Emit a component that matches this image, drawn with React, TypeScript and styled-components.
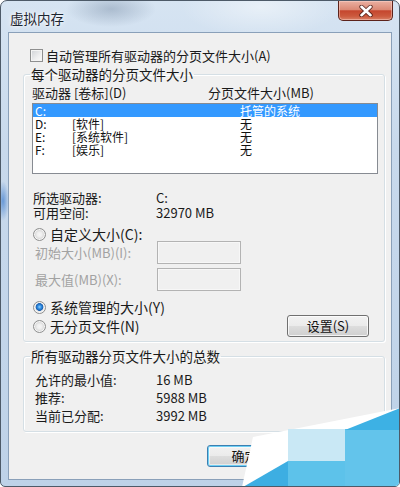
import React from "react";
import styled, { createGlobalStyle } from "styled-components";

const Global = createGlobalStyle`
  html, body { margin: 0; padding: 0; background: #ffffff; }
  body { font-family: "Noto Sans CJK SC", "Noto Sans", sans-serif; }
  * { box-sizing: border-box; }
`;

const FONT = `"Noto Sans CJK SC", "Noto Sans", sans-serif`;

const Window = styled.div`
  position: relative;
  width: 400px;
  height: 487px;
  display: flex;
  flex-direction: column;
  padding: 0 7px 6px 7px;
  border: 1px solid #4d5a68;
  border-radius: 7px 7px 5px 5px;
  overflow: hidden;
  background:
    radial-gradient(ellipse 45px 18px at 110px 8px, rgba(120, 140, 165, 0.45), transparent),
    radial-gradient(ellipse 6px 20px at 2px 200px, rgba(40, 110, 200, 0.6), transparent),
    radial-gradient(ellipse 80px 30px at 260px 6px, rgba(255, 255, 255, 0.45), transparent),
    linear-gradient(180deg, #d6e4f2 0%, #c8d9ec 30%, #bed2e8 100%);
`;

const TitleBar = styled.div`
  height: 31px;
  display: flex;
  justify-content: space-between;
  align-items: flex-start;
  flex-shrink: 0;
`;

const Title = styled.div`
  margin: 8px 0 0 2px;
  font-family: ${FONT};
  font-size: 13.5px;
  line-height: 18px;
  color: #1c2530;
  text-shadow: 0 0 6px rgba(255, 255, 255, 0.95), 0 0 3px rgba(255, 255, 255, 0.9);
`;

const CloseButton = styled.div`
  width: 55px;
  height: 20px;
  margin-right: -1px;
  display: flex;
  align-items: center;
  justify-content: center;
  border: 1px solid #5c231b;
  border-top: none;
  border-radius: 0 0 5px 5px;
  background: linear-gradient(180deg, #eab0a2 0%, #dc8a76 45%, #c5462e 52%, #cc5a3e 80%, #d98066 100%);
  box-shadow: inset 0 0 0 1px rgba(255, 220, 210, 0.45);
`;

const Client = styled.div`
  flex: 1;
  display: flex;
  flex-direction: column;
  background: #f0f0f0;
  border: 1px solid #8aa0b9;
  padding: 0 6px 0 14px;
  font-family: ${FONT};
  color: #1a1a1a;
`;

const CheckRow = styled.label`
  display: flex;
  align-items: center;
  gap: 3px;
  height: 13px;
  margin: 16px 0 0 7px;
  font-size: 13px;
  line-height: 15px;
`;

const CheckBox = styled.span`
  width: 13px;
  height: 13px;
  flex-shrink: 0;
  border: 1px solid #8e8f8f;
  background: linear-gradient(135deg, #cfd2d6 0%, #eeeeef 60%, #fbfbfb 100%);
  box-shadow: inset 0 0 0 1px #f4f4f4;
`;

const Group = styled.fieldset<{ $mt: number; $pb: number }>`
  margin: ${(p) => p.$mt}px 0 0 0;
  padding: 0 6px ${(p) => p.$pb}px 8px;
  border: 1px solid #d5dfe5;
  border-radius: 3px;
  box-shadow: inset 1px 1px 0 #ffffff, 1px 1px 0 #ffffff;
  min-width: 0;
`;

const Legend = styled.legend`
  padding: 0 1px;
  margin-left: -2px;
  font-size: 13.5px;
  line-height: 15px;
  color: #1a1a1a;
`;

const Headers = styled.div`
  display: grid;
  grid-template-columns: 176px 1fr;
  margin-top: 4px;
  font-size: 13px;
  line-height: 14px;
`;

const ListBox = styled.div`
  margin-top: 3px;
  height: 71px;
  border: 1px solid #878b92;
  background: #ffffff;
`;

const ListRow = styled.div<{ $sel?: boolean }>`
  display: grid;
  grid-template-columns: 37px 168px 1fr;
  height: 13px;
  padding-left: 2px;
  font-size: 12px;
  line-height: 13px;
  color: ${(p) => (p.$sel ? "#ffffff" : "#111111")};
  background: ${(p) => (p.$sel ? "#3399ff" : "transparent")};
`;

const InfoGrid = styled.div<{ $mt: number; $pl: number; $lh: number }>`
  display: grid;
  grid-template-columns: ${(p) => 124 - p.$pl}px 1fr;
  margin-top: ${(p) => p.$mt}px;
  padding-left: ${(p) => p.$pl}px;
  font-size: 13px;
  line-height: ${(p) => p.$lh}px;
`;

const RadioRow = styled.label<{ $mt: number }>`
  display: flex;
  align-items: center;
  gap: 4px;
  height: 14px;
  margin-top: ${(p) => p.$mt}px;
  padding-left: 1px;
  font-size: 14px;
  line-height: 14px;
`;

const Radio = styled.span<{ $on?: boolean }>`
  width: 13px;
  height: 13px;
  flex-shrink: 0;
  border-radius: 50%;
  border: 1px solid #8e8f8f;
  background: ${(p) =>
    p.$on
      ? "radial-gradient(circle at 50% 45%, #8fd0ff 0, #2d8ae0 2px, #1c5fae 3.6px, #e6e6e6 4.2px, #f8f8f8 100%)"
      : "radial-gradient(circle at 50% 50%, #f6f6f6 0, #eeeeee 2.5px, #d3d3d3 5px, #f4f4f4 100%)"};
  box-shadow: inset 0 0 0 1px #f6f6f6;
`;

const FieldRow = styled.div<{ $mt: number }>`
  display: grid;
  grid-template-columns: 122px 84px;
  align-items: center;
  margin-top: ${(p) => p.$mt}px;
  padding-left: 3px;
  font-size: 13px;
  line-height: 15px;
  color: #a2a2a2;
`;

const TextBox = styled.div`
  width: 84px;
  height: 23px;
  border: 1px solid #b3b3b3;
  background: #f0f0f0;
  box-shadow: inset 0 0 0 1px #f7f7f7;
`;

const BottomRow = styled.div`
  display: flex;
  align-items: center;
  justify-content: space-between;
  margin-top: 1px;
  height: 22px;
`;

const Button = styled.button<{ $w: number; $default?: boolean }>`
  width: ${(p) => p.$w}px;
  height: 22px;
  padding: 0;
  border: 1px solid ${(p) => (p.$default ? "#3c7fb1" : "#707070")};
  border-radius: 3px;
  background: linear-gradient(180deg, #f2f2f2 0%, #ebebeb 48%, #dddddd 52%, #cfcfcf 100%);
  box-shadow: ${(p) =>
    p.$default ? "inset 0 0 0 1px #6fd0f5, inset 0 0 0 2px rgba(255,255,255,0.5)" : "inset 0 0 0 1px rgba(255,255,255,0.75)"};
  font-family: ${FONT};
  font-size: 13px;
  line-height: 20px;
  color: #111111;
`;

const ButtonBar = styled.div`
  display: flex;
  justify-content: flex-end;
  gap: 7px;
  margin: 13px 21px 0 0;
`;

const Watermark = styled.svg`
  position: absolute;
  right: -1px;
  bottom: -1px;
  width: 170px;
  height: 87px;
`;

const drives = [
  { d: "C:", label: "", size: "托管的系统", sel: true },
  { d: "D:", label: "[软件]", size: "无" },
  { d: "E:", label: "[系统软件]", size: "无" },
  { d: "F:", label: "[娱乐]", size: "无" },
];

export default function App() {
  return (
    <>
      <Global />
      <Window>
        <TitleBar>
          <Title>虚拟内存</Title>
          <CloseButton>
            <svg width="14" height="12" viewBox="0 0 14 12">
              <path d="M2.5 1.8 L11.5 10.2 M11.5 1.8 L2.5 10.2" stroke="#3a1410" strokeWidth="4.4" strokeLinecap="round" opacity="0.75" />
              <path d="M2.5 1.8 L11.5 10.2 M11.5 1.8 L2.5 10.2" stroke="#ffffff" strokeWidth="2.6" strokeLinecap="round" />
            </svg>
          </CloseButton>
        </TitleBar>
        <Client>
          <CheckRow>
            <CheckBox />
            自动管理所有驱动器的分页文件大小(A)
          </CheckRow>

          <Group $mt={5} $pb={4}>
            <Legend>每个驱动器的分页文件大小</Legend>
            <Headers>
              <span>驱动器 [卷标](D)</span>
              <span>分页文件大小(MB)</span>
            </Headers>
            <ListBox>
              {drives.map((r) => (
                <ListRow key={r.d} $sel={r.sel}>
                  <span>{r.d}</span>
                  <span>{r.label}</span>
                  <span>{r.size}</span>
                </ListRow>
              ))}
            </ListBox>
            <InfoGrid $mt={16} $pl={1} $lh={15}>
              <span>所选驱动器:</span>
              <span>C:</span>
              <span>可用空间:</span>
              <span>32970 MB</span>
            </InfoGrid>
            <RadioRow $mt={7}>
              <Radio />
              自定义大小(C):
            </RadioRow>
            <FieldRow $mt={0}>
              <span>初始大小(MB)(I):</span>
              <TextBox />
            </FieldRow>
            <FieldRow $mt={4}>
              <span>最大值(MB)(X):</span>
              <TextBox />
            </FieldRow>
            <RadioRow $mt={9}>
              <Radio $on />
              系统管理的大小(Y)
            </RadioRow>
            <BottomRow>
              <RadioRow $mt={0}>
                <Radio />
                无分页文件(N)
              </RadioRow>
              <Button $w={82} style={{ marginRight: 9 }}>设置(S)</Button>
            </BottomRow>
          </Group>

          <Group $mt={7} $pb={6}>
            <Legend>所有驱动器分页文件大小的总数</Legend>
            <InfoGrid $mt={7} $pl={3} $lh={18}>
              <span>允许的最小值:</span>
              <span>16 MB</span>
              <span>推荐:</span>
              <span>5988 MB</span>
              <span>当前已分配:</span>
              <span>3992 MB</span>
            </InfoGrid>
          </Group>

          <ButtonBar>
            <Button $w={75} $default>确定</Button>
            <Button $w={75}>取消</Button>
          </ButtonBar>
        </Client>
        <Watermark viewBox="0 0 170 87">
          <polygon points="12,87 23,37 170,8 170,87" fill="#ffffff" />
          <polygon points="13,87 58,61 58,87" fill="#3daee2" />
          <rect x="58" y="61" width="57" height="26" fill="#5dc2ea" />
          <rect x="58" y="29" width="57" height="32" fill="#c9e8f5" />
          <rect x="115" y="29" width="55" height="58" fill="#63c4eb" />
          <polygon points="115,30 170,8 170,30" fill="#3db1e4" />
        </Watermark>
      </Window>
    </>
  );
}
